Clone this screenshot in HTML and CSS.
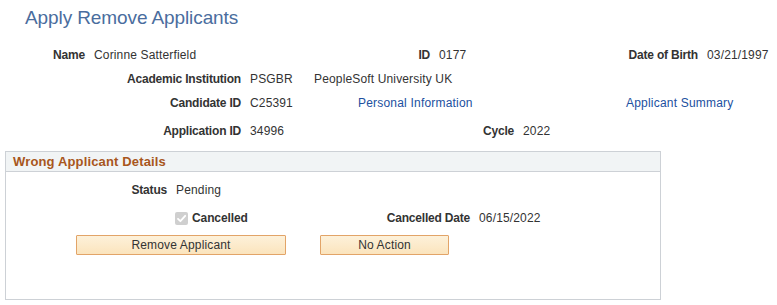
FILE: index.html
```html
<!DOCTYPE html>
<html>
<head>
<meta charset="utf-8">
<link rel="stylesheet" href="styles.css">
</head>
<body>
<div class="page">
  <h1 class="title">Apply Remove Applicants</h1>
  <div class="form">
    <div class="row r1">
      <span class="lbl w85">Name</span>
      <span class="val w276">Corinne Satterfield</span>
      <span class="lbl w60 nogap">ID</span>
      <span class="val w130">0177</span>
      <span class="lbl w129 nogap">Date of Birth</span>
      <span class="val">03/21/1997</span>
    </div>
    <div class="row r2">
      <span class="lbl w241">Academic Institution</span>
      <span class="val w64">PSGBR</span>
      <span class="val nogap">PeopleSoft University UK</span>
    </div>
    <div class="row r3">
      <span class="lbl w241">Candidate ID</span>
      <span class="val w108">C25391</span>
      <a class="link w268" href="#">Personal Information</a>
      <a class="link" href="#">Applicant Summary</a>
    </div>
    <div class="row r4">
      <span class="lbl w241">Application ID</span>
      <span class="val w174">34996</span>
      <span class="lbl w90 nogap">Cycle</span>
      <span class="val">2022</span>
    </div>
  </div>

  <section class="group">
    <div class="group-head">Wrong Applicant Details</div>
    <div class="group-body">
      <div class="row g1">
        <span class="lbl w161">Status</span>
        <span class="val">Pending</span>
      </div>
      <div class="row g2">
        <div class="checkwrap">
          <span class="checkbox" aria-hidden="true">
            <svg width="13" height="13" viewBox="0 0 13 13"><path d="M3 6.8 L5.4 9.2 L10.2 3.8" fill="none" stroke="#ffffff" stroke-width="1.8" stroke-linecap="round" stroke-linejoin="round"/></svg>
          </span>
          <span class="checklabel">Cancelled</span>
        </div>
        <span class="lbl w170 nogap">Cancelled Date</span>
        <span class="val">06/15/2022</span>
      </div>
      <div class="row g3">
        <button class="btn btn-remove" type="button">Remove Applicant</button>
        <button class="btn btn-none" type="button">No Action</button>
      </div>
    </div>
  </section>
</div>
</body>
</html>
```

FILE: styles.css
```css
html, body {
  margin: 0;
  padding: 0;
  background: #ffffff;
}

body {
  font-family: "Liberation Sans", Arial, sans-serif;
  font-size: 12px;
  color: #333333;
}

.page {
  padding-top: 6px;
}

.title {
  margin: 0 0 0 25px;
  font-size: 19px;
  line-height: 24px;
  letter-spacing: -0.1px;
  font-weight: normal;
  color: #4a6d9e;
}

.form {
  display: flex;
  flex-direction: column;
}

.row {
  display: flex;
  align-items: center;
  height: 16px;
  line-height: 16px;
  white-space: nowrap;
}

.r1 { margin-top: 17px; }
.r2 { margin-top: 8px; }
.r3 { margin-top: 8px; }
.r4 { margin-top: 12px; }

.lbl {
  font-weight: bold;
  text-align: right;
  letter-spacing: -0.2px;
  color: #333333;
  flex: none;
}

.val {
  margin-left: 9px;
  flex: none;
  letter-spacing: 0.15px;
  color: #333333;
}

.val.nogap { margin-left: 0; }

.link {
  color: #2150a0;
  text-decoration: none;
  letter-spacing: 0.2px;
  flex: none;
}

.w60 { width: 60px; }
.w64 { width: 64px; }
.w85 { width: 85px; }
.w90 { width: 90px; }
.w108 { width: 108px; }
.w129 { width: 129px; }
.w130 { width: 130px; }
.w161 { width: 161px; }
.w170 { width: 170px; }
.w174 { width: 174px; }
.w241 { width: 241px; }
.w268 { width: 268px; }
.w276 { width: 276px; }

.group {
  margin: 12px 0 0 5px;
  width: 654px;
  height: 147px;
  border: 1px solid #cdd1d6;
  display: flex;
  flex-direction: column;
}

.group-head {
  height: 19px;
  line-height: 19px;
  padding-left: 7px;
  background: #f1f4f5;
  border-bottom: 1px solid #cdd1d6;
  font-size: 13px;
  font-weight: bold;
  letter-spacing: 0.15px;
  color: #a8561c;
}

.group-body {
  display: flex;
  flex-direction: column;
  padding-top: 10px;
}

.g2 { margin-top: 12px; }
.g3 { margin-top: 9px; height: 20px; }

.checkwrap {
  width: 294px;
  display: flex;
  align-items: center;
  flex: none;
}

.checkbox {
  margin-left: 169px;
  width: 13px;
  height: 13px;
  border-radius: 2px;
  background: #cfcfcf;
  display: flex;
  flex: none;
}

.checklabel {
  margin-left: 4px;
  font-weight: bold;
  letter-spacing: -0.1px;
  color: #333333;
}

.btn {
  height: 20px;
  padding: 0;
  border: 1px solid #e2a468;
  border-radius: 1px;
  background: linear-gradient(#fdf1da, #fbe4bd);
  font-family: "Liberation Sans", Arial, sans-serif;
  font-size: 12px;
  line-height: 18px;
  letter-spacing: 0.15px;
  color: #333333;
  text-align: center;
  flex: none;
}

.btn-remove {
  margin-left: 70px;
  width: 210px;
}

.btn-none {
  margin-left: 34px;
  width: 129px;
}
```
